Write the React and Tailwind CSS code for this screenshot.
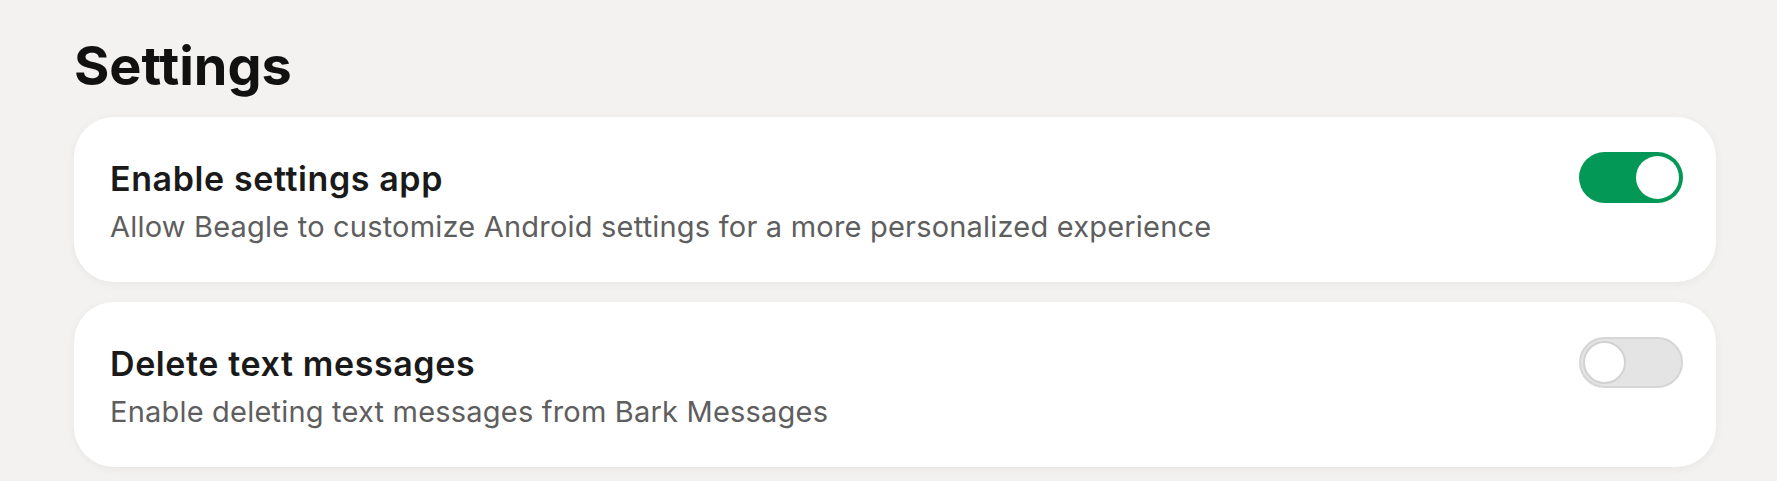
import React, { useState } from "react";

function Toggle({ on, onChange }) {
  return (
    <button
      type="button"
      onClick={onChange}
      className={
        on
          ? "flex h-[51px] w-[104px] shrink-0 items-center justify-end rounded-full bg-[#039855] p-[4px]"
          : "flex h-[51px] w-[104px] shrink-0 items-center justify-start rounded-full border-2 border-[#d6d6d6] bg-[#e4e4e4] p-[2px]"
      }
    >
      <span
        className={
          on
            ? "block h-[43px] w-[43px] rounded-full bg-white"
            : "block h-[43px] w-[43px] rounded-full border-2 border-[#d2d2d2] bg-white"
        }
      />
    </button>
  );
}

function SettingCard({ title, description, on, onChange }) {
  return (
    <div className="flex items-start justify-between rounded-[40px] bg-white pb-[37px] pl-[36px] pr-[33px] pt-[35px] shadow-[0_2px_10px_rgba(0,0,0,0.05)]">
      <div className="mt-[7px] flex flex-col gap-[10px]">
        <div className="text-[34px] font-semibold leading-[40px] tracking-[0.6px] text-[#1a1a1a]">{title}</div>
        <div className="text-[29px] font-normal leading-[36px] tracking-[0.2px] text-[#5e5e5e]">{description}</div>
      </div>
      <Toggle on={on} onChange={onChange} />
    </div>
  );
}

export default function App() {
  const [a, setA] = useState(true);
  const [b, setB] = useState(false);
  return (
    <div
      className="min-h-screen bg-[#f3f2f0] pl-[74px] pr-[61px] pt-[38px]"
      style={{ fontFamily: "Inter, 'Noto Sans', sans-serif" }}
    >
      <h1 className="mb-[24px] text-[54px] font-bold leading-[55px] text-[#111111]">Settings</h1>
      <div className="flex flex-col gap-[20px]">
        <SettingCard
          title="Enable settings app"
          description="Allow Beagle to customize Android settings for a more personalized experience"
          on={a}
          onChange={() => setA(!a)}
        />
        <SettingCard
          title="Delete text messages"
          description="Enable deleting text messages from Bark Messages"
          on={b}
          onChange={() => setB(!b)}
        />
      </div>
    </div>
  );
}
